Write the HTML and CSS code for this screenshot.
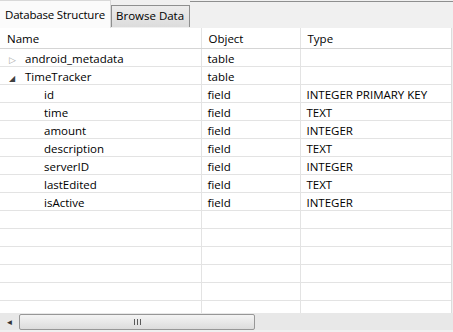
FILE: index.html
```html
<!DOCTYPE html>
<html lang="en">
<head>
  <meta charset="UTF-8" />
  <title>Database Structure</title>
  <link rel="stylesheet" href="styles.css">
</head>
<body>

  <div class="tab-bar">
    <div class="tab active">Database Structure</div>
    <div class="tab">Browse Data</div>
    <div class="tab-rest"></div>
  </div>

  <div class="panel">
    <table class="tree">
      <colgroup>
        <col class="col-name" />
        <col class="col-object" />
        <col class="col-type" />
      </colgroup>
      <thead>
        <tr><th>Name</th><th>Object</th><th>Type</th></tr>
      </thead>
      <tbody>
        <tr><td><span class="arrow closed">&#9655;</span>android_metadata</td><td>table</td><td></td></tr>
        <tr><td><span class="arrow open">&#9698;</span>TimeTracker</td><td>table</td><td></td></tr>
        <tr><td class="child">id</td><td>field</td><td>INTEGER PRIMARY KEY</td></tr>
        <tr><td class="child">time</td><td>field</td><td>TEXT</td></tr>
        <tr><td class="child">amount</td><td>field</td><td>INTEGER</td></tr>
        <tr><td class="child">description</td><td>field</td><td>TEXT</td></tr>
        <tr><td class="child">serverID</td><td>field</td><td>INTEGER</td></tr>
        <tr><td class="child">lastEdited</td><td>field</td><td>TEXT</td></tr>
        <tr><td class="child">isActive</td><td>field</td><td>INTEGER</td></tr>
        <tr><td></td><td></td><td></td></tr>
        <tr><td></td><td></td><td></td></tr>
        <tr><td></td><td></td><td></td></tr>
        <tr><td></td><td></td><td></td></tr>
        <tr><td></td><td></td><td></td></tr>
        <tr><td></td><td></td><td></td></tr>
        <tr><td></td><td></td><td></td></tr>
      </tbody>
    </table>
  </div>

  <div class="hscroll">
    <div class="scroll-btn">&#9668;</div>
    <div class="scroll-thumb"><span class="grip"></span></div>
  </div>

</body>
</html>
```

FILE: styles.css
```css
body {
  margin: 0;
  padding: 0;
  width: 453px;
  height: 332px;
  overflow: hidden;
  background: #f0f0f0;
  font-family: 'Open Sans', sans-serif;
  font-size: 11.5px;
  color: #000;
}

.tab-bar {
  display: flex;
  height: 28px;
  background: #f0f0f0;
}

.tab {
  box-sizing: border-box;
  margin-top: 5px;
  height: 22px;
  padding: 2px 5px 0 4px;
  background: linear-gradient(#ececec, #dcdcdc);
  border: 1px solid #8e8f8f;
  border-bottom: none;
  white-space: nowrap;
}

.tab.active {
  margin-top: 0;
  height: 28px;
  padding: 6px 5px 0 5px;
  width: 111px;
  background: #fbfbfb;
  border: 1px solid #d9d9d9;
  border-left: none;
  border-bottom: none;
  letter-spacing: -0.2px;
}

.tab-rest {
  flex: 1;
  margin-top: 1px;
  border-top: 1px solid #8e8f8f;
}

.panel {
  height: 285px;
  width: 451px;
  overflow: hidden;
  background: #fff;
  border-right: 1px solid #dcdcdc;
}

.tree {
  border-collapse: collapse;
  table-layout: fixed;
  width: 451px;
}

.col-name { width: 201px; }
.col-object { width: 99px; }
.col-type { width: 151px; }

.tree th {
  height: 19px;
  padding: 1px 0 0 7px;
  text-align: left;
  font-weight: normal;
  border-right: 1px solid #e3e3e3;
  border-bottom: 1px solid #d5d5d5;
}

.tree td {
  height: 15px;
  padding: 2px 0 0 6px;
  white-space: nowrap;
  border-right: 1px solid #e3e3e3;
  border-bottom: 1px solid #e3e3e3;
}

.tree td.child {
  padding-left: 44px;
}

.arrow {
  display: inline-block;
  width: 19px;
  padding-left: 3px;
  box-sizing: border-box;
  font-size: 9px;
  color: #a7a7a7;
}

.arrow.open {
  color: #404040;
  font-size: 8px;
}

.hscroll {
  display: flex;
  align-items: center;
  height: 17px;
  background: #e8e8e8;
}

.scroll-btn {
  width: 19px;
  text-align: center;
  font-size: 8px;
  color: #333;
}

.scroll-thumb {
  box-sizing: border-box;
  width: 236px;
  height: 16px;
  display: flex;
  align-items: center;
  justify-content: center;
  background: linear-gradient(#f4f4f4, #dcdcdc);
  border: 1px solid #979797;
  border-radius: 2px;
}

.grip {
  width: 7px;
  height: 6px;
  background: repeating-linear-gradient(90deg, #5a5a5a 0 1px, transparent 1px 3px);
}
```
